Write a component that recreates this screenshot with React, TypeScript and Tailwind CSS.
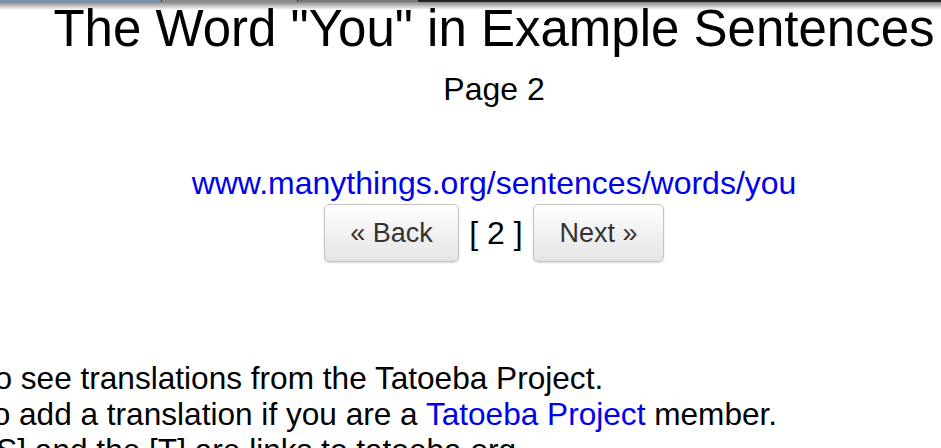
import React from "react";

const font = { fontFamily: '"Liberation Sans", Arial, sans-serif' };

const TopStrip = () => (
  <div className="absolute left-0 top-0 w-full">
    <div className="flex h-[2px]">
      <div className="w-[161px] bg-[#7593bb]" />
      <div className="w-[1px] bg-[#333]" />
      <div className="w-[135px] bg-[#8a8a8a]" />
      <div className="w-[1px] bg-[#333]" />
      <div className="w-[120px] bg-[#777]" />
      <div className="flex-1 bg-[#222]" />
    </div>
    <div className="h-[8px] bg-gradient-to-b from-[#555]/70 to-transparent" />
  </div>
);

const NavButton = ({ label, width }: { label: string; width: string }) => (
  <button
    className={`${width} h-[58px] rounded-[5px] border border-[#c4c4c4] bg-gradient-to-b from-white to-[#e4e4e4] text-[27px] text-[#333] shadow-[0_1px_2px_rgba(0,0,0,0.15)]`}
  >
    {label}
  </button>
);

export default function App() {
  return (
    <div className="relative h-[448px] w-[941px] overflow-hidden bg-white text-black" style={font}>
      <TopStrip />
      <div className="w-[988px] text-center">
        <h1 className="text-[51px] leading-[58px] font-normal">The Word "You" in Example Sentences</h1>
        <p className="mt-[13px] text-[32px] leading-[37px]">Page 2</p>
        <div className="mt-[57px] text-[32px] leading-[37px]">
          <a className="text-[#0000ee]">www.manythings.org/sentences/words/you</a>
        </div>
        <div className="mt-[2px] flex items-center justify-center gap-[10px]">
          <NavButton label="« Back" width="w-[135px]" />
          <span className="w-[54px] text-[32px] leading-[37px]">[ 2 ]</span>
          <NavButton label="Next »" width="w-[131px]" />
        </div>
      </div>
      <div className="mt-[98px] ml-[-139px] whitespace-nowrap text-[31.6px] leading-[36px]">
        <div>Click [S] to see translations from the Tatoeba Project.</div>
        <div>
          Click [T] to add a translation if you are a <a className="text-[#0000ee]">Tatoeba Project</a> member.
        </div>
        <div>Both the [S] and the [T] are links to tatoeba.org.</div>
      </div>
    </div>
  );
}
